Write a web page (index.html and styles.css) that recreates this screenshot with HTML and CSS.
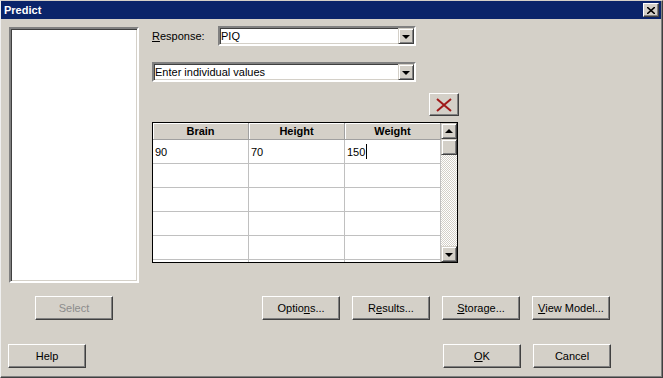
FILE: index.html
```html
<!DOCTYPE html>
<html lang="en">
<head>
    <meta charset="UTF-8">
    <title>Predict</title>
    <link rel="stylesheet" href="styles.css">
</head>
<body>
    <div class="dialog">
        <div class="titlebar">
            <span class="title">Predict</span>
            <button class="close-btn" aria-label="Close">
                <svg width="8" height="7" viewBox="0 0 8 7"><path d="M0 0 L8 7 M8 0 L0 7" stroke="#000" stroke-width="1.6"/></svg>
            </button>
        </div>

        <div class="content">
            <div class="left-col">
                <div class="listbox"></div>
                <button class="btn" disabled>Select</button>
            </div>

            <div class="right-col">
                <div class="response-row">
                    <label class="field-label"><u>R</u>esponse:</label>
                    <div class="combo combo-response">
                        <span class="combo-text">PIQ</span>
                        <span class="combo-arrow"><i class="tri-down"></i></span>
                    </div>
                </div>

                <div class="combo combo-method">
                    <span class="combo-text">Enter individual values</span>
                    <span class="combo-arrow"><i class="tri-down"></i></span>
                </div>

                <div class="grid-tools">
                    <button class="delete-btn" aria-label="Delete">
                        <svg width="16" height="14" viewBox="0 0 16 14"><path d="M1 1 L15 13 M15 1 L1 13" stroke="#a01818" stroke-width="2"/></svg>
                    </button>
                </div>

                <div class="datagrid">
                    <div class="grid-cells">
                        <div class="cell head">Brain</div>
                        <div class="cell head">Height</div>
                        <div class="cell head">Weight</div>

                        <div class="cell">90</div>
                        <div class="cell">70</div>
                        <div class="cell">150<span class="caret"></span></div>

                        <div class="cell"></div><div class="cell"></div><div class="cell"></div>
                        <div class="cell"></div><div class="cell"></div><div class="cell"></div>
                        <div class="cell"></div><div class="cell"></div><div class="cell"></div>
                        <div class="cell"></div><div class="cell"></div><div class="cell"></div>
                        <div class="cell"></div><div class="cell"></div><div class="cell"></div>
                    </div>
                    <div class="scrollbar">
                        <span class="sb-btn"><i class="tri-up"></i></span>
                        <span class="sb-thumb"></span>
                        <span class="sb-track"></span>
                        <span class="sb-btn"><i class="tri-down"></i></span>
                    </div>
                </div>

                <div class="action-row">
                    <button class="btn">Optio<u>n</u>s...</button>
                    <button class="btn">R<u>e</u>sults...</button>
                    <button class="btn"><u>S</u>torage...</button>
                    <button class="btn"><u>V</u>iew Model...</button>
                </div>
            </div>
        </div>

        <div class="footer">
            <button class="btn">Help</button>
            <div class="footer-right">
                <button class="btn"><u>O</u>K</button>
                <button class="btn">Cancel</button>
            </div>
        </div>
    </div>
</body>
</html>
```

FILE: styles.css
```css
body {
    margin: 0;
    padding: 0;
    font-family: 'Liberation Sans', Arial, sans-serif;
    font-size: 11px;
    color: #000;
    background-color: #d4d0c8;
}
.dialog {
    width: 663px;
    height: 378px;
    box-sizing: border-box;
    background-color: #d4d0c8;
    border-top: 1px solid #d4d0c8;
    border-left: 1px solid #f0f0f0;
    border-bottom: 1px solid #404040;
    border-right: 1px solid #404040;
    box-shadow: inset -1px -1px #808080;
}
.titlebar {
    height: 18px;
    background-color: #0a246a;
    display: flex;
    align-items: center;
    justify-content: space-between;
    padding: 0 2px 0 2px;
    margin-right: 1px;
}
.title {
    color: #ffffff;
    font-weight: bold;
    font-size: 11px;
    padding-left: 1px;
}
.close-btn {
    width: 16px;
    height: 14px;
    padding: 0;
    background-color: #d4d0c8;
    border: 1px solid;
    border-color: #ffffff #404040 #404040 #ffffff;
    box-shadow: inset -1px -1px #808080;
    display: flex;
    align-items: center;
    justify-content: center;
}
.content {
    display: flex;
    padding: 7px 0 0 8px;
}
.left-col {
    width: 130px;
    margin-top: 1px;
    display: flex;
    flex-direction: column;
    align-items: center;
}
.listbox {
    width: 130px;
    height: 256px;
    box-sizing: border-box;
    background-color: #ffffff;
    border: 2px solid;
    border-color: #808080 #ffffff #ffffff #808080;
    box-shadow: inset 1px 1px #404040, inset -1px -1px #d4d0c8;
}
.btn {
    width: 78px;
    height: 24px;
    box-sizing: border-box;
    padding: 0;
    font-family: inherit;
    font-size: 11px;
    color: #000;
    background-color: #d4d0c8;
    border: 1px solid;
    border-color: #ffffff #404040 #404040 #ffffff;
    box-shadow: inset -1px -1px #808080;
}
.btn:disabled {
    color: #8c8c8c;
}
.left-col .btn {
    margin-top: 13px;
}
.right-col {
    margin-left: 13px;
    display: flex;
    flex-direction: column;
}
.response-row {
    display: flex;
    align-items: center;
    height: 20px;
}
.field-label {
    width: 66px;
}
.combo {
    height: 20px;
    box-sizing: border-box;
    background-color: #ffffff;
    border: 2px solid;
    border-color: #808080 #ffffff #ffffff #808080;
    box-shadow: inset 1px 1px #404040, inset -1px -1px #d4d0c8;
    display: flex;
    align-items: center;
    justify-content: space-between;
    padding: 0 0 0 1px;
}
.combo-response {
    width: 198px;
}
.combo-method {
    width: 264px;
    margin-top: 16px;
}
.combo-arrow {
    width: 16px;
    height: 16px;
    box-sizing: border-box;
    background-color: #d4d0c8;
    border: 1px solid;
    border-color: #d4d0c8 #404040 #404040 #d4d0c8;
    box-shadow: inset 1px 1px #ffffff, inset -1px -1px #808080;
    display: flex;
    align-items: center;
    justify-content: center;
}
.tri-down, .tri-up {
    display: block;
    width: 0;
    height: 0;
    border-left: 4px solid transparent;
    border-right: 4px solid transparent;
}
.tri-down {
    border-top: 4px solid #000;
    margin-top: 1px;
}
.tri-up {
    border-bottom: 4px solid #000;
    margin-bottom: 1px;
}
.grid-tools {
    width: 307px;
    margin-top: 11px;
    display: flex;
    justify-content: flex-end;
}
.delete-btn {
    width: 30px;
    height: 23px;
    padding: 0;
    background-color: #d4d0c8;
    border: 1px solid;
    border-color: #ffffff #404040 #404040 #ffffff;
    box-shadow: inset -1px -1px #808080;
    display: flex;
    align-items: center;
    justify-content: center;
}
.datagrid {
    width: 306px;
    height: 141px;
    margin-top: 6px;
    box-sizing: border-box;
    border: 1px solid #000;
    display: flex;
    background-color: #ffffff;
}
.grid-cells {
    width: 288px;
    height: 139px;
    overflow: hidden;
    display: grid;
    grid-template-columns: repeat(3, 96px);
    grid-auto-rows: 24px;
    grid-template-rows: 17px;
    align-content: start;
}
.cell {
    box-sizing: border-box;
    border-right: 1px solid #c0c0c0;
    border-bottom: 1px solid #c0c0c0;
    padding: 0 2px;
    display: flex;
    align-items: center;
    color: #000000;
}
.cell.head {
    background-color: #d4d0c8;
    font-weight: bold;
    justify-content: center;
    border-right-color: #a0a0a0;
    border-bottom-color: #a0a0a0;
    box-shadow: inset 1px 1px #ffffff;
}
.caret {
    display: inline-block;
    width: 1px;
    height: 15px;
    background-color: #000;
    margin-left: 1px;
}
.scrollbar {
    width: 16px;
    display: flex;
    flex-direction: column;
}
.sb-btn, .sb-thumb {
    width: 16px;
    height: 16px;
    box-sizing: border-box;
    background-color: #d4d0c8;
    border: 1px solid;
    border-color: #d4d0c8 #404040 #404040 #d4d0c8;
    box-shadow: inset 1px 1px #ffffff, inset -1px -1px #808080;
    display: flex;
    align-items: center;
    justify-content: center;
}
.sb-track {
    flex: 1;
    background: repeating-conic-gradient(#ffffff 0 25%, #d4d0c8 0 50%) 0 0 / 2px 2px;
}
.action-row {
    display: flex;
    gap: 12px;
    margin-top: 33px;
    padding-left: 110px;
}
.footer {
    display: flex;
    justify-content: space-between;
    margin-top: 24px;
    padding: 0 51px 0 7px;
}
.footer-right {
    display: flex;
    gap: 12px;
}
```
